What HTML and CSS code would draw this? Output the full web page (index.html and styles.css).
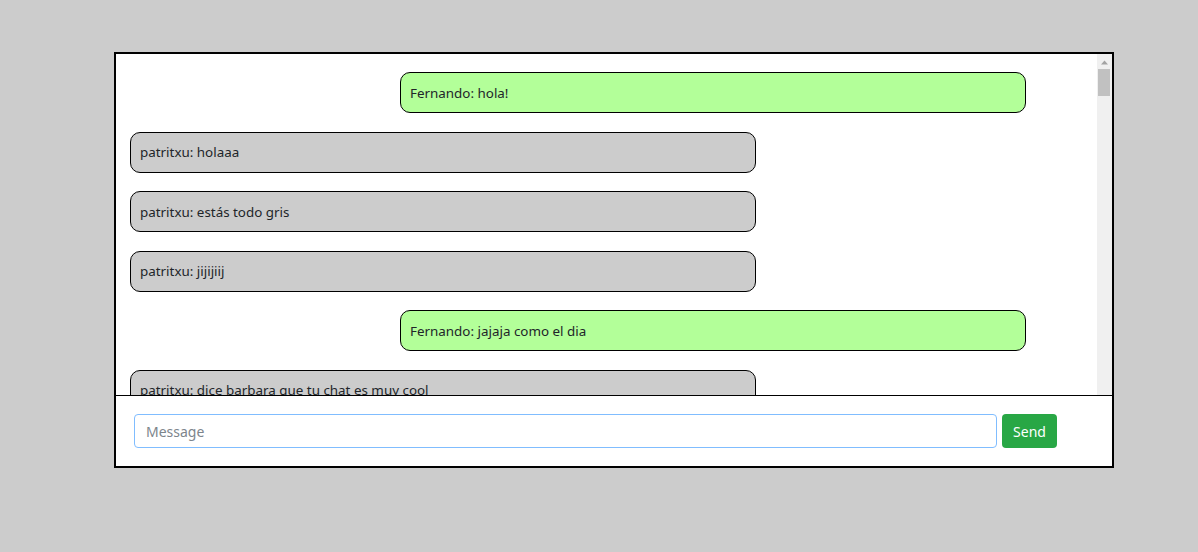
FILE: index.html
```
<!DOCTYPE html>
<html lang="es">
<head>
<meta charset="utf-8">
<title>Chat</title>
<link rel="stylesheet" href="styles.css">
</head>
<body>
<div class="chat">
  <div class="messages">
    <div class="list">
      <div class="msg mine">Fernando: hola!</div>
      <div class="msg other">patritxu: holaaa</div>
      <div class="msg other">patritxu: estás todo gris</div>
      <div class="msg other">patritxu: jijijiij</div>
      <div class="msg mine">Fernando: jajaja como el dia</div>
      <div class="msg other">patritxu: dice barbara que tu chat es muy cool</div>
    </div>
    <div class="scrollbar" aria-hidden="true">
      <div class="sb-up">
        <svg width="15" height="15" viewBox="0 0 15 15"><path d="M4 10.5h7L7.5 6.5z" fill="#a3a3a3"/></svg>
      </div>
      <div class="sb-thumb"></div>
    </div>
  </div>
  <form class="composer">
    <input class="input" type="text" placeholder="Message" autofocus>
    <button class="send" type="button">Send</button>
  </form>
</div>
</body>
</html>
```
FILE: styles.css
```
html, body {
  margin: 0;
  padding: 0;
}
body {
  background: #cccccc;
  font-family: "Noto Sans", "Open Sans", sans-serif;
  color: #212529;
}
.chat {
  box-sizing: border-box;
  width: 1000px;
  margin: 52px 0 0 114px;
  border: 2px solid #000;
  background: #fff;
}
.messages {
  display: flex;
  height: 341px;
  overflow: hidden;
  border-bottom: 1px solid #000;
}
.list {
  flex: 1;
  min-width: 0;
  padding-top: 18.4px;
  display: flex;
  flex-direction: column;
  gap: 18.5px;
}
.msg {
  flex: none;
  box-sizing: border-box;
  width: 626px;
  height: 41px;
  padding: 0 9px;
  display: flex;
  align-items: center;
  border: 1px solid #000;
  border-radius: 10px;
  font-size: 13.4px;
}
.mine {
  margin-left: 284px;
  background: #b3ff99;
}
.other {
  margin-left: 14px;
  background: #cccccc;
}
.scrollbar {
  flex: none;
  width: 15px;
  background: #f0f0f0;
  display: flex;
  flex-direction: column;
}
.sb-up {
  height: 15px;
}
.sb-up svg {
  display: block;
}
.sb-thumb {
  height: 27px;
  margin: 0 2px 0 1px;
  background: #c1c1c1;
}
.composer {
  display: flex;
  gap: 5px;
  margin: 0;
  padding: 18px 55px 18px 18px;
}
.input {
  flex: 1;
  height: 34px;
  box-sizing: border-box;
  border: 1px solid #80bdff;
  border-radius: 4px;
  padding: 0 11px;
  font-family: inherit;
  font-size: 14px;
  color: #495057;
  outline: none;
}
.input::placeholder {
  color: #7d858c;
}
.send {
  height: 34px;
  width: 55px;
  box-sizing: border-box;
  border: none;
  border-radius: 4px;
  background: #28a745;
  color: #fff;
  font-family: inherit;
  font-size: 14px;
  padding: 0;
}
```
